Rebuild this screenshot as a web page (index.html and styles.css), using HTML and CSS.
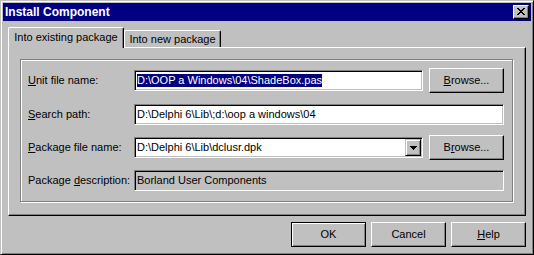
FILE: index.html
```html
<!DOCTYPE html>
<html>
<head>
<meta charset="utf-8">
<title>Install Component</title>
<link rel="stylesheet" href="styles.css">
</head>
<body>
<div class="window">
  <div class="titlebar">
    <span class="title">Install Component</span>
    <button class="close" aria-label="Close">
      <svg class="xglyph" width="8" height="7" viewBox="0 0 8 7" shape-rendering="crispEdges"><path d="M0 0h2v1H0zM6 0h2v1H6zM1 1h2v1H1zM5 1h2v1H5zM2 2h4v1H2zM3 3h2v1H3zM2 4h4v1H2zM1 5h2v1H1zM5 5h2v1H5zM0 6h2v1H0zM6 6h2v1H6z" fill="#000"/></svg>
    </button>
  </div>
  <div class="tabs">
    <div class="tab active">Into existing package</div>
    <div class="tab inactive">Into new package</div>
  </div>
  <div class="page">
    <div class="group">
      <div class="row">
        <label class="lbl"><u>U</u>nit file name:</label>
        <div class="edit short"><span class="sel">D:\OOP a Windows\04\ShadeBox.pas</span></div>
        <button class="btn browse"><u>B</u>rowse...</button>
      </div>
      <div class="row r2">
        <label class="lbl"><u>S</u>earch path:</label>
        <div class="edit long"><span>D:\Delphi 6\Lib\;d:\oop a windows\04</span></div>
      </div>
      <div class="row r3">
        <label class="lbl"><u>P</u>ackage file name:</label>
        <div class="combo short">
          <span class="ctext">D:\Delphi 6\Lib\dclusr.dpk</span>
          <span class="drop"><svg width="7" height="4" viewBox="0 0 7 4" shape-rendering="crispEdges"><path d="M0 0h7v1H0zM1 1h5v1H1zM2 2h3v1H2zM3 3h1v1H3z" fill="#000"/></svg></span>
        </div>
        <button class="btn browse">B<u>r</u>owse...</button>
      </div>
      <div class="row r3">
        <label class="lbl">Package <u>d</u>escription:</label>
        <div class="edit long disabled"><span>Borland User Components</span></div>
      </div>
    </div>
  </div>
  <div class="buttons">
    <button class="btn push default">OK</button>
    <button class="btn push">Cancel</button>
    <button class="btn push"><u>H</u>elp</button>
  </div>
</div>
</body>
</html>
```
FILE: styles.css
```css
* {
  box-sizing: border-box;
  margin: 0;
  padding: 0;
}

html, body {
  width: 534px;
  height: 255px;
  overflow: hidden;
  background: #c0c0c0;
}

body {
  font-family: "Liberation Sans", Arial, sans-serif;
  font-size: 11px;
  line-height: 13px;
  color: #000;
}

.window {
  width: 534px;
  height: 255px;
  background: #c0c0c0;
  border: 1px solid;
  border-color: #c0c0c0 #000 #000 #c0c0c0;
  box-shadow: inset 1px 1px #fff, inset -1px -1px #808080;
  padding: 2px;
  display: flex;
  flex-direction: column;
}

.titlebar {
  height: 18px;
  background: #000080;
  display: flex;
  align-items: center;
  padding: 0 2px 0 2px;
}

.title {
  color: #fff;
  font-weight: bold;
  font-size: 12px;
  line-height: 14px;
  letter-spacing: 0;
}

.close {
  margin-left: auto;
  width: 16px;
  height: 14px;
  background: #c0c0c0;
  border: 1px solid;
  border-color: #fff #000 #000 #fff;
  box-shadow: inset -1px -1px #808080;
  display: flex;
  align-items: center;
  justify-content: center;
  padding-bottom: 1px;
}

.xglyph {
  display: block;
}

.tabs {
  display: flex;
  align-items: flex-end;
  margin-top: 6px;
  padding-left: 5px;
  height: 20px;
  position: relative;
  z-index: 1;
}

.tab {
  background: #c0c0c0;
  border-top: 1px solid #fff;
  border-left: 1px solid #fff;
  border-right: 1px solid #000;
  border-radius: 2px 2px 0 0;
  box-shadow: inset -1px 0 #808080;
  text-align: center;
  white-space: nowrap;
}

.tab.active {
  width: 116px;
  height: 21px;
  margin-bottom: -1px;
  padding-top: 3px;
}

.tab.inactive {
  width: 97px;
  height: 17px;
  padding-top: 2px;
}

.page {
  margin: 0 5px;
  width: 518px;
  height: 169px;
  border: 1px solid;
  border-color: #fff #000 #000 #fff;
  box-shadow: inset -1px -1px #808080;
  padding: 11px;
}

.group {
  width: 493px;
  height: 143px;
  border: 1px solid #808080;
  box-shadow: inset 1px 1px #fff, 1px 1px #fff;
  padding: 10px 0 0 7px;
  display: flex;
  flex-direction: column;
}

.row {
  display: flex;
  align-items: center;
  height: 21px;
}

.row.r2 {
  margin-top: 13px;
}

.row.r3 {
  margin-top: 12px;
}

.lbl {
  width: 106px;
  white-space: nowrap;
}

.edit,
.combo {
  height: 21px;
  background: #fff;
  border: 1px solid;
  border-color: #808080 #fff #fff #808080;
  box-shadow: inset 1px 1px #000, inset -1px -1px #c0c0c0;
  display: flex;
  align-items: center;
  white-space: nowrap;
  overflow: hidden;
}

.edit {
  padding-left: 2px;
}

.short {
  width: 289px;
}

.long {
  width: 370px;
}

.edit.disabled {
  background: #c0c0c0;
}

.sel {
  background: #000080;
  color: #fff;
}

.combo {
  padding: 1px;
  align-items: stretch;
}

.ctext {
  flex: 1;
  display: flex;
  align-items: center;
  padding-left: 1px;
}

.drop {
  width: 16px;
  background: #c0c0c0;
  border: 1px solid;
  border-color: #c0c0c0 #000 #000 #c0c0c0;
  box-shadow: inset 1px 1px #fff, inset -1px -1px #808080;
  display: flex;
  align-items: center;
  justify-content: center;
}

.drop svg {
  display: block;
}

.btn {
  font-family: inherit;
  font-size: 11px;
  line-height: 13px;
  color: #000;
  background: #c0c0c0;
  border: 1px solid;
  border-color: #fff #000 #000 #fff;
  box-shadow: inset -1px -1px #808080;
  width: 75px;
  height: 25px;
  display: flex;
  align-items: center;
  justify-content: center;
}

.browse {
  margin: -2px 0 -2px 6px;
}

.buttons {
  display: flex;
  justify-content: flex-end;
  gap: 5px;
  margin-top: 6px;
  padding-right: 5px;
}

.push.default {
  border-color: #000;
  box-shadow: inset 1px 1px #fff, inset -1px -1px #808080;
}
```
